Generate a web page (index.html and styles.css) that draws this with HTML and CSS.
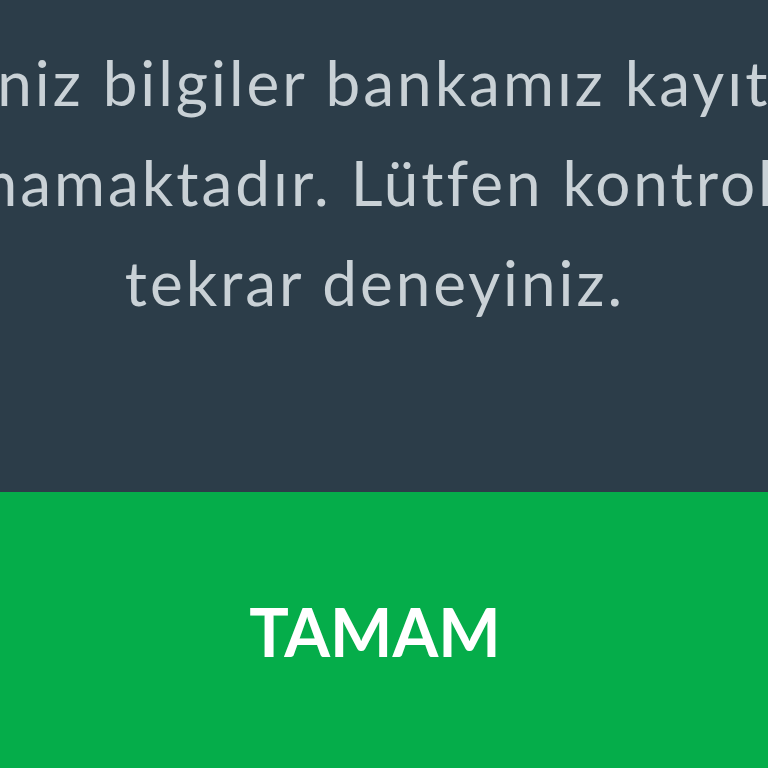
FILE: index.html
```html
<!DOCTYPE html>
<html lang="tr">
<head>
<meta charset="utf-8">
<link rel="stylesheet" href="styles.css">
</head>
<body>
<div class="screen">
  <div class="dialog">
    <div class="message">
      <p class="text">Girdiğiniz bilgiler bankamız kayıtlarıyla<br>uyuşmamaktadır. Lütfen kontrol edip<br>tekrar deneyiniz.</p>
    </div>
    <button class="ok">TAMAM</button>
  </div>
</div>
</body>
</html>
```

FILE: styles.css
```css
html, body {
  margin: 0;
  padding: 0;
  background: #2c3d49;
}
.screen {
  width: 768px;
  height: 768px;
  overflow: hidden;
  background: #2c3d49;
}
.dialog {
  width: 1400px;
  margin-left: -325px;
  display: flex;
  flex-direction: column;
}
.message {
  background: #2c3d49;
  padding: 32px 0 160px;
}
.text {
  margin: 0;
  font-family: Lato, "Liberation Sans", sans-serif;
  font-size: 62px;
  letter-spacing: 3px;
  line-height: 100px;
  color: #c9d1d6;
  text-align: center;
  white-space: nowrap;
}
.ok {
  height: 278px;
  border: 0;
  margin: 0;
  padding: 0;
  background: #05ad4a;
  color: #ffffff;
  font-family: Lato, "Liberation Sans", sans-serif;
  font-weight: 700;
  font-size: 66px;
  text-align: center;
}
```
